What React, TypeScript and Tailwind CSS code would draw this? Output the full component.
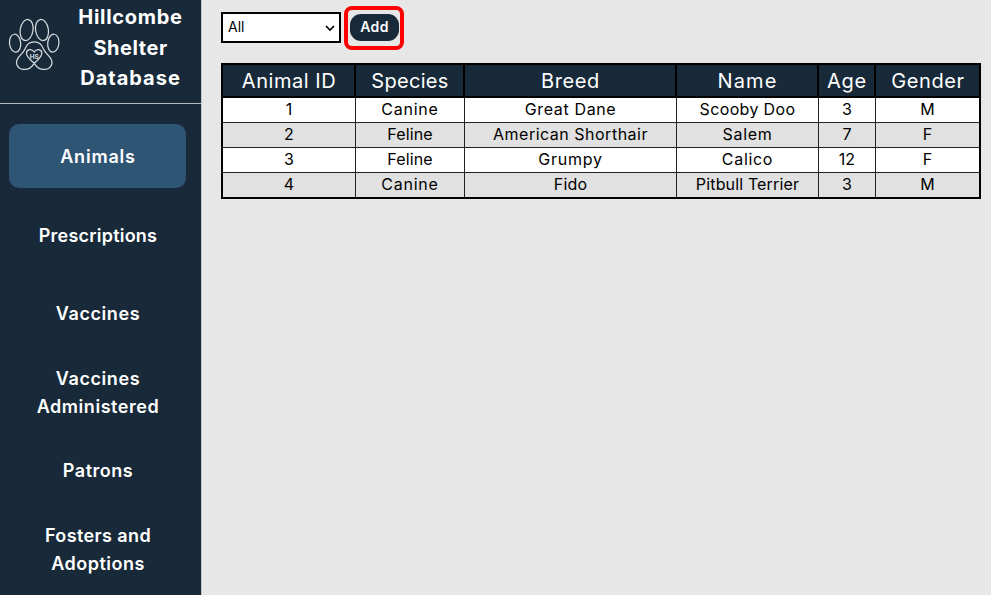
import React from "react";

const navItems = [
  { lines: [["Animals", "tracking-[0.8px]"]], active: true },
  { lines: [["Prescriptions", "tracking-[0.22px]"]] },
  { lines: [["Vaccines", "tracking-[0.6px]"]] },
  { lines: [["Vaccines", "tracking-[0.6px]"], ["Administered", "tracking-[0.55px]"]] },
  { lines: [["Patrons", "tracking-[0.5px]"]] },
  { lines: [["Fosters and", "tracking-[0.4px]"], ["Adoptions", "tracking-[0.5px]"]] },
];

const columns = [
  ["Animal ID", "tracking-[0.55px]"],
  ["Species", "tracking-[0.3px]"],
  ["Breed", "tracking-[0.6px]"],
  ["Name", "tracking-[1.1px]"],
  ["Age", "tracking-[0.8px]"],
  ["Gender", "tracking-[0.6px]"],
];

const rows = [
  ["1", "Canine", "Great Dane", "Scooby Doo", "3", "M"],
  ["2", "Feline", "American Shorthair", "Salem", "7", "F"],
  ["3", "Feline", "Grumpy", "Calico", "12", "F"],
  ["4", "Canine", "Fido", "Pitbull Terrier", "3", "M"],
];

const cellTracking: Record<string, string> = {
  Canine: "tracking-[0.75px]",
  Feline: "tracking-[0.15px]",
  "Great Dane": "tracking-[0.65px]",
  "American Shorthair": "tracking-[0.5px]",
  Grumpy: "tracking-[0.8px]",
  Fido: "tracking-[0.2px]",
  "Scooby Doo": "tracking-[0.35px]",
  Salem: "tracking-[0.7px]",
  Calico: "tracking-[0.7px]",
  "Pitbull Terrier": "tracking-[0.15px]",
};

function PawLogo() {
  return (
    <svg width="52" height="54" viewBox="8 17 52 54" fill="none" stroke="#d5dade" strokeWidth="1.25" className="shrink-0">
      <ellipse cx="26.6" cy="30" rx="6.4" ry="10.6" transform="rotate(9 26.6 30)" />
      <ellipse cx="42" cy="30" rx="6.4" ry="10.6" transform="rotate(-9 42 30)" />
      <ellipse cx="15.1" cy="43.2" rx="5.6" ry="9" transform="rotate(-6 15.1 43.2)" />
      <ellipse cx="53.3" cy="43.2" rx="5.6" ry="9" transform="rotate(6 53.3 43.2)" />
      <path d="M34.2 63.3C30 59.5 26.5 57 26.5 53.2C26.5 49 32 48.5 34.2 52C36.4 48.5 41.8 49 41.8 53.2C41.8 57 38.4 59.5 34.2 63.3C31 68.5 27 70 22.5 69.3C17.5 68.5 15 63.5 17.5 59C20 54.5 23.2 53.5 25.2 48.5C28.5 39.5 40 39.5 43.2 48.5C45.2 53.5 48.5 54.5 51 59C53.5 63.5 50.8 68.5 46 69.3C41.5 70 37.5 68.5 34.2 63.3Z" />
      <text x="34.3" y="58.8" textAnchor="middle" stroke="none" fill="#d5dade" className="font-['Inter',sans-serif] text-[6.5px] font-bold">HS</text>
    </svg>
  );
}

export default function App() {
  return (
    <div className="flex h-[595px] w-[991px] overflow-hidden bg-[#e7e7e7] font-['Inter',sans-serif]">
      <aside className="flex w-[202px] shrink-0 flex-col border-r border-[#c2c6c9] bg-[#182a39]">
        <header className="flex h-[104px] shrink-0 items-start border-b border-[#b5bcc2] pl-2">
          <div className="pt-[17px]"><PawLogo /></div>
          <h1 className="w-[141px] pt-[2.4px] text-center text-[20px] leading-[30.4px] font-bold text-white">
            <span className="block tracking-[0.7px]">Hillcombe</span>
            <span className="block tracking-[0.55px]">Shelter</span>
            <span className="block tracking-[1px]">Database</span>
          </h1>
        </header>
        <nav className="flex flex-col gap-[14.6px] pt-5 pr-[15px] pl-[9px]">
          {navItems.map((item, i) => (
            <a key={i} className={`flex h-16 shrink-0 flex-col items-center justify-center rounded-[10px] pt-[1.5px] pl-[1px] text-[18px] leading-[27.4px] font-[560] text-white ${item.active ? "bg-[#2f5575]" : ""}`}>
              {item.lines.map(([text, tracking]) => (
                <span key={text} className={`whitespace-nowrap ${tracking}`}>{text}</span>
              ))}
            </a>
          ))}
        </nav>
      </aside>
      <main className="flex flex-col pt-[6px] pl-[19px]">
        <div className="flex h-[44px] items-start">
          <button className="mt-[6px] flex h-[31px] w-[120px] items-center justify-between border-2 border-black bg-white pr-[3px] pb-[2px] pl-[5px] text-[14px] text-black">
            <span>All</span>
            <svg width="12" height="8" viewBox="0 0 12 8" fill="none" stroke="black" strokeWidth="1.7" className="mt-[2px]"><path d="M2 2L6 6L10 2" /></svg>
          </button>
          <div className="ml-[3px] flex h-[44px] w-[60px] items-center justify-center rounded-[8px] border-4 border-[#fe0000] pb-[2px]">
            <button className="flex h-[27px] w-[49px] items-center justify-center rounded-[11px] bg-[#182a39] pb-[2px] pl-[1px] text-[14px] font-semibold tracking-[0.4px] text-white">Add</button>
          </div>
        </div>
        <table className="mt-[13px] w-[760px] table-fixed border-separate border-spacing-0 border-2 border-black text-center text-black">
          <colgroup>
            <col className="w-[133px]" /><col className="w-[109px]" /><col className="w-[212px]" />
            <col className="w-[142px]" /><col className="w-[57px]" /><col className="w-[103px]" />
          </colgroup>
          <thead>
            <tr className="h-[33px] bg-[#182a39] text-[20px] leading-[30px] text-white">
              {columns.map(([c, tracking]) => <th key={c} className={`border-r-2 border-b-2 border-black p-0 pl-[1px] font-normal whitespace-nowrap last:border-r-0 ${tracking}`}>{c}</th>)}
            </tr>
          </thead>
          <tbody>
            {rows.map((row) => (
              <tr key={row[0]} className="group h-[25px] bg-white text-[16px] leading-[22px] last:h-[24px] even:bg-[#e1e1e1]">
                {row.map((v, i) => <td key={i} className={`border-r border-b border-[#222] p-0 pb-[2px] whitespace-nowrap group-last:border-b-0 last:border-r-0 ${cellTracking[v] ?? ""}`}>{v}</td>)}
              </tr>
            ))}
          </tbody>
        </table>
      </main>
    </div>
  );
}
